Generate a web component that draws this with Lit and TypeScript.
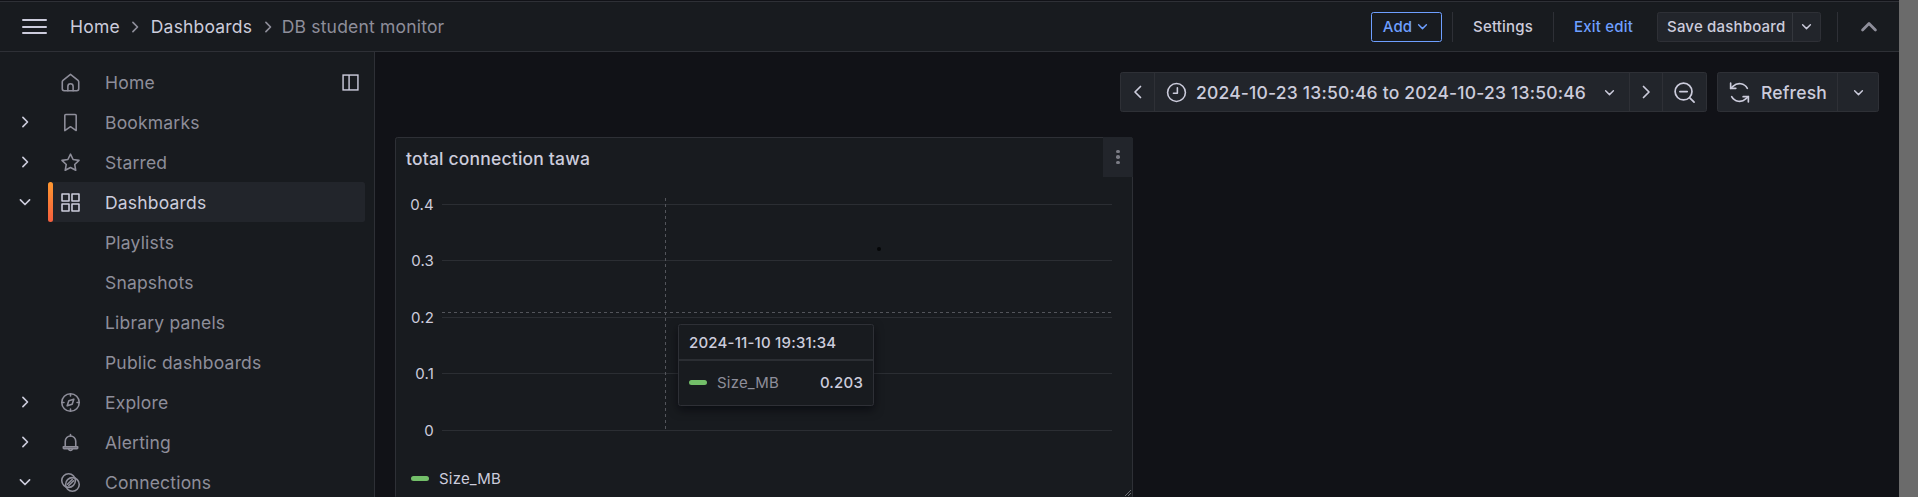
import { LitElement, html, css, svg } from 'lit';
import { customElement } from 'lit/decorators.js';

const ICONS: Record<string, unknown> = {
  home: svg`<path d="M12 2.600 3.400 9.500A2.400 2.400 0 0 0 2.600 11.200v8a2.200 2.200 0 0 0 2.200 2.200h14.400a2.200 2.200 0 0 0 2.200-2.200v-8a2.400 2.400 0 0 0-.8-1.700L12 2.600Z"/><path d="M9 21.400v-4.900a3 3 0 0 1 6 0v4.900"/>`,
  bookmark: svg`<path d="M6.700 2.800h10.600a1.200 1.200 0 0 1 1.200 1.200v17.200L12 16.800l-6.500 4.400V4a1.200 1.200 0 0 1 1.200-1.200Z"/>`,
  star: svg`<path d="m12 2.500 2.950 6.100 6.750.95-4.900 4.700 1.200 6.650L12 17.750 5.950 20.900l1.200-6.650-4.900-4.700L9 8.600 12 2.500Z"/>`,
  apps: svg`<rect x="2.300" y="2.300" width="8" height="8"/><rect x="13.700" y="2.300" width="8" height="8"/><rect x="2.300" y="13.700" width="8" height="8"/><rect x="13.700" y="13.700" width="8" height="8"/>`,
  compass: svg`<circle cx="12" cy="12" r="10"/><path d="m15.800 8.200-1.900 5.700-5.700 1.900 1.900-5.700 5.700-1.900Z"/><path d="M12 2.500v2M12 19.500v2M2.500 12h2M19.500 12h2"/>`,
  bell: svg`<path d="M6 16.500V10.500a6 6 0 0 1 12 0v6"/><path d="M3.800 16.800h16.400v1.400a.8.800 0 0 1-.8.800H4.600a.8.800 0 0 1-.8-.800v-1.400Z"/><path d="M9.800 19.500a2.300 2.300 0 0 0 4.400 0M12 4.500V2.800"/>`,
  link: svg`<circle cx="9.800" cy="9.800" r="7.800"/><circle cx="14.200" cy="14.200" r="7.800"/><path d="m8.500 14 5.500-5.500"/><path d="m10 15.500 5.500-5.500"/>`,
  clock: svg`<circle cx="12" cy="12" r="10.200"/><path d="M13 6.500V12.800H8.500"/>`,
  sync: svg`<path d="M19.500 8A8.700 8.700 0 0 0 6 5.800L3.500 8"/><path d="M3.500 3v5h5"/><path d="M4.500 16A8.700 8.700 0 0 0 18 18.200l2.500-2.200"/><path d="M20.500 21v-5h-5"/>`,
  zoom: svg`<circle cx="11" cy="11" r="8.800"/><path d="M7.200 11h7.600M17.500 17.500 22 22"/>`,
  panel: svg`<rect x="1.500" y="1.500" width="21" height="21"/><path d="M10 1.500v21"/>`,
};

const icon = (name: string, cls = '') =>
  html`<svg class="ico ${cls}" viewBox="0 0 24 24">${ICONS[name]}</svg>`;

const chev = (dir: 'right' | 'down' | 'left' | 'up', cls = '') => {
  const d = {
    right: 'M9.500 6.500 15 12l-5.500 5.500',
    left: 'M14.500 6.500 9 12l5.500 5.500',
    down: 'M6.500 9.500 12 15l5.500-5.500',
    up: 'M6.500 14.500 12 9l5.500 5.500',
  }[dir];
  return html`<svg class="chev ${cls}" viewBox="0 0 24 24"><path d=${d} /></svg>`;
};

const NAV = [
  { label: 'Home', icon: 'home', dock: true },
  { label: 'Bookmarks', icon: 'bookmark', toggle: 'right' },
  { label: 'Starred', icon: 'star', toggle: 'right' },
  { label: 'Dashboards', icon: 'apps', toggle: 'down', active: true },
  { label: 'Playlists' },
  { label: 'Snapshots' },
  { label: 'Library panels' },
  { label: 'Public dashboards' },
  { label: 'Explore', icon: 'compass', toggle: 'right' },
  { label: 'Alerting', icon: 'bell', toggle: 'right' },
  { label: 'Connections', icon: 'link', toggle: 'down' },
];

const GRID = [
  { label: '0.4', y: 26.5 },
  { label: '0.3', y: 82.5 },
  { label: '0.2', y: 139.5 },
  { label: '0.1', y: 195.5 },
  { label: '0', y: 252.5 },
];

@customElement('app-root')
export class AppRoot extends LitElement {
  static override styles = css`
    :host {
      display: flex;
      height: 100vh;
      overflow: hidden;
      background: #6b6b6b;
      font-family: Inter, 'Noto Sans', sans-serif;
      letter-spacing: 0.19px;
      color: #ccccdc;
    }

    .ico {
      width: 21px;
      height: 21px;
      flex: none;
      fill: none;
      stroke: currentColor;
      stroke-width: 1.8;
      stroke-linecap: round;
      stroke-linejoin: round;
    }

    .chev {
      width: 20px;
      height: 20px;
      flex: none;
      fill: none;
      stroke: currentColor;
      stroke-width: 2;
      stroke-linecap: round;
      stroke-linejoin: round;
    }

    .app {
      width: 1899px;
      height: 100%;
      flex: none;
      display: flex;
      flex-direction: column;
      background: #111217;
    }

    .topbar {
      height: 51px;
      flex: none;
      box-sizing: border-box;
      margin-top: 1px;
      border-top: 1px solid #2e3036;
      border-bottom: 1px solid #2e3036;
      background: #181b1f;
      display: flex;
      align-items: center;
      padding-left: 22px;
    }

    .burger {
      width: 25px;
      display: flex;
      flex-direction: column;
      gap: 4.5px;
      margin-right: 23px;
    }

    .burger span {
      height: 2px;
      background: #ccccdc;
      border-radius: 1px;
    }

    .crumbs {
      display: flex;
      align-items: center;
      font-size: 17.5px;
      color: #ccccdc;
    }

    .crumbs .chev {
      margin: 0 5.5px;
      color: #8e8e9a;
    }

    .crumbs .current {
      color: #8e8e9a;
      margin-left: -1.5px;
    }

    .actions {
      margin-left: auto;
      display: flex;
      align-items: center;
      font-size: 15px;
      font-weight: 500;
      height: 30px;
    }

    .add {
      height: 30px;
      width: 71px;
      box-sizing: border-box;
      border: 1px solid #6e9fff;
      border-radius: 2.5px;
      color: #6e9fff;
      display: flex;
      align-items: center;
      justify-content: center;
      gap: 2px;
      padding-left: 1px;
    }

    .add .chev {
      width: 17px;
      height: 17px;
    }

    .sep {
      width: 1px;
      height: 30px;
      background: #2e3036;
      flex: none;
    }

    .sep.first {
      margin: 0 20px 0 10px;
    }

    .settings {
      width: 60px;
      white-space: nowrap;
      margin-right: 20px;
    }

    .exit {
      width: 58px;
      white-space: nowrap;
      margin: 0 25px 0 20px;
      color: #6e9fff;
    }

    .save {
      display: flex;
      height: 30px;
      box-sizing: border-box;
      border: 1px solid #2e3036;
      border-radius: 2.5px;
      background: #22252b;
      align-items: center;
      width: 164px;
    }

    .save b {
      font-weight: 500;
      flex: 1;
      padding-left: 9px;
      line-height: 28px;
      border-right: 1px solid #34373d;
    }

    .save .chev {
      width: 17px;
      height: 17px;
      margin: 0 5px;
    }

    .up {
      width: 62px;
      height: 30px;
      box-sizing: border-box;
      margin-left: 16px;
      border-left: 1px solid #2e3036;
      display: flex;
      align-items: center;
      justify-content: center;
      color: #8e8e9a;
    }

    .up .chev {
      width: 28px;
      height: 28px;
      stroke-width: 2.4;
    }

    .body {
      flex: 1;
      display: flex;
      min-height: 0;
    }

    .side {
      width: 375px;
      flex: none;
      box-sizing: border-box;
      background: #181b1f;
      border-right: 1px solid #2e3036;
      padding-top: 10px;
      overflow: hidden;
    }

    .row {
      height: 40px;
      display: flex;
      align-items: center;
      font-size: 17.5px;
      color: #8e8e9a;
    }

    .toggle {
      width: 48px;
      flex: none;
      display: flex;
      justify-content: center;
      margin-left: 1px;
      margin-right: -1px;
      color: #ccccdc;
    }

    .item {
      position: relative;
      width: 317px;
      height: 40px;
      display: flex;
      align-items: center;
      border-radius: 2.5px;
    }

    .item .slot {
      width: 44px;
      flex: none;
      display: flex;
      justify-content: center;
      margin-right: 13px;
    }

    .row.active .item {
      background: #22252b;
      color: #ccccdc;
    }

    .row.active .item::before {
      content: '';
      position: absolute;
      left: 0;
      top: 0;
      bottom: 0;
      width: 5px;
      border-radius: 2.5px;
      background: linear-gradient(#ff9830, #f55f3e);
    }

    .dock.ico {
      width: 17px;
      height: 17px;
      margin-left: auto;
      margin-right: 6px;
      color: #ccccdc;
      stroke-linecap: butt;
      stroke-linejoin: miter;
      stroke-width: 2;
    }

    .main {
      flex: 1;
      min-width: 0;
      padding: 20px 20px 0 20px;
      display: flex;
      flex-direction: column;
    }

    .toolbar {
      display: flex;
      justify-content: flex-end;
      gap: 10px;
      font-size: 17.5px;
      font-weight: 500;
      margin-bottom: 25px;
    }

    .group {
      display: flex;
      height: 40px;
      box-sizing: border-box;
      border: 1px solid #2e3036;
      border-radius: 2.5px;
      background: #22252b;
      align-items: stretch;
    }

    .group > div {
      display: flex;
      align-items: center;
      justify-content: center;
      box-sizing: border-box;
      border-left: 1px solid #2e3036;
    }

    .group > div:first-child {
      border-left: none;
    }

    .arrow {
      width: 33px;
    }

    .arrow .chev {
      width: 24px;
      height: 24px;
      stroke-width: 1.7;
    }

    .zoom-out {
      width: 44px;
    }

    .zoom-out .ico {
      width: 23px;
      height: 23px;
    }

    .group > .range {
      width: 475px;
      padding-left: 10.5px;
      gap: 9.5px;
      justify-content: flex-start;
      white-space: nowrap;
    }

    .range .chev {
      width: 17px;
      height: 17px;
      margin-left: 5px;
    }

    .group > .refresh {
      width: 119px;
      padding-left: 9px;
      gap: 9px;
      justify-content: flex-start;
    }

    .refresh .ico {
      width: 25px;
      height: 25px;
      stroke-width: 1.6;
    }

    .more {
      width: 41px;
    }

    .more .chev {
      width: 17px;
      height: 17px;
    }

    .panel {
      position: relative;
      width: 738px;
      height: 362px;
      box-sizing: border-box;
      flex: none;
      border: 1px solid #2e3036;
      border-radius: 2.5px;
      background: #181b1f;
    }

    .panel-head {
      height: 40px;
      display: flex;
      align-items: flex-start;
      justify-content: space-between;
    }

    .panel-title {
      font-size: 17.5px;
      font-weight: 500;
      padding: 10px 0 0 10px;
      line-height: 21px;
    }

    .menu {
      width: 30px;
      height: 40px;
      margin: -1px -1px 0 0;
      background: #22252b;
      border-radius: 0 2.5px 0 0;
      display: flex;
      flex-direction: column;
      align-items: center;
      justify-content: center;
      gap: 2.2px;
    }

    .menu span {
      width: 3.5px;
      height: 3.5px;
      border-radius: 50%;
      background: #7c7d86;
    }

    .chart {
      position: relative;
      height: 284px;
    }

    .chart svg {
      display: block;
    }

    .chart text {
      font-size: 15px;
      fill: #ccccdc;
      text-anchor: end;
      dominant-baseline: central;
    }

    .grid {
      stroke: #2b2e33;
      stroke-width: 1;
    }

    .cross {
      stroke: #53555b;
      stroke-width: 1;
      stroke-dasharray: 3 3;
    }

    .tooltip {
      position: absolute;
      left: 282px;
      top: 146px;
      width: 196px;
      height: 82px;
      box-sizing: border-box;
      background: #181b1f;
      border: 1px solid #2e3036;
      border-radius: 2.5px;
      box-shadow: 0 4px 10px rgba(1, 4, 9, 0.55);
      font-size: 15px;
    }

    .tip-time {
      height: 36px;
      box-sizing: border-box;
      padding: 0 10px;
      line-height: 36px;
      font-weight: 500;
      border-bottom: 2px solid #2b2e33;
    }

    .tip-row {
      display: flex;
      align-items: center;
      padding: 0 10px;
      height: 43px;
    }

    .swatch {
      width: 18px;
      height: 5px;
      flex: none;
      border-radius: 3px;
      background: #73bf69;
      margin-right: 10px;
    }

    .tip-name {
      color: #8e8e9a;
    }

    .tip-val {
      margin-left: auto;
      font-weight: 500;
    }

    .legend {
      height: 32px;
      display: flex;
      align-items: center;
      font-size: 15px;
      padding-left: 15px;
      color: #ccccdc;
    }

    .handle {
      position: absolute;
      right: 1px;
      bottom: 2px;
      width: 6px;
      height: 6px;
      stroke: #6b6d73;
      fill: none;
    }
  `;

  private renderNav(n: (typeof NAV)[number]) {
    return html`
      <div class="row ${n.active ? 'active' : ''}">
        <div class="toggle">${n.toggle ? chev(n.toggle as 'right' | 'down') : ''}</div>
        <div class="item">
          <div class="slot">${n.icon ? icon(n.icon) : ''}</div>
          <span>${n.label}</span>
          ${n.dock ? icon('panel', 'dock') : ''}
        </div>
      </div>
    `;
  }

  override render() {
    return html`
      <div class="app">
        <header class="topbar">
          <div class="burger"><span></span><span></span><span></span></div>
          <nav class="crumbs">
            <span>Home</span>${chev('right')}<span>Dashboards</span>${chev('right')}
            <span class="current">DB student monitor</span>
          </nav>
          <div class="actions">
            <div class="add">Add${chev('down')}</div>
            <div class="sep first"></div>
            <div class="settings">Settings</div>
            <div class="sep"></div>
            <div class="exit">Exit edit</div>
            <div class="save"><b>Save dashboard</b>${chev('down')}</div>
            <div class="up">${chev('up')}</div>
          </div>
        </header>
        <div class="body">
          <aside class="side">${NAV.map((n) => this.renderNav(n))}</aside>
          <main class="main">
            <div class="toolbar">
              <div class="group">
                <div class="arrow">${chev('left')}</div>
                <div class="range">${icon('clock')}<span>2024-10-23 13:50:46 to 2024-10-23 13:50:46</span>${chev('down')}</div>
                <div class="arrow">${chev('right')}</div>
                <div class="zoom-out">${icon('zoom')}</div>
              </div>
              <div class="group">
                <div class="refresh">${icon('sync')}<span>Refresh</span></div>
                <div class="more">${chev('down')}</div>
              </div>
            </div>
            <section class="panel">
              <div class="panel-head">
                <div class="panel-title">total connection tawa</div>
                <div class="menu"><span></span><span></span><span></span></div>
              </div>
              <div class="chart">
                <svg width="736" height="284">
                  ${GRID.map(
                    (g) => svg`<line class="grid" x1="46" x2="716" y1=${g.y} y2=${g.y} /><text x="38" y=${g.y}>${g.label}</text>`
                  )}
                  <line class="cross" x1="46" x2="716" y1="134.500" y2="134.500" />
                  <line class="cross" x1="269.500" x2="269.500" y1="20" y2="251" />
                  <circle cx="483" cy="71" r="2" fill="#050608" />
                </svg>
                <div class="tooltip">
                  <div class="tip-time">2024-11-10 19:31:34</div>
                  <div class="tip-row">
                    <span class="swatch"></span>
                    <span class="tip-name">Size_MB</span>
                    <span class="tip-val">0.203</span>
                  </div>
                </div>
              </div>
              <div class="legend"><span class="swatch"></span>Size_MB</div>
              <svg class="handle" viewBox="0 0 6 6"><path d="M0 6 6 0M3 6l3-3" /></svg>
            </section>
          </main>
        </div>
      </div>
    `;
  }
}
